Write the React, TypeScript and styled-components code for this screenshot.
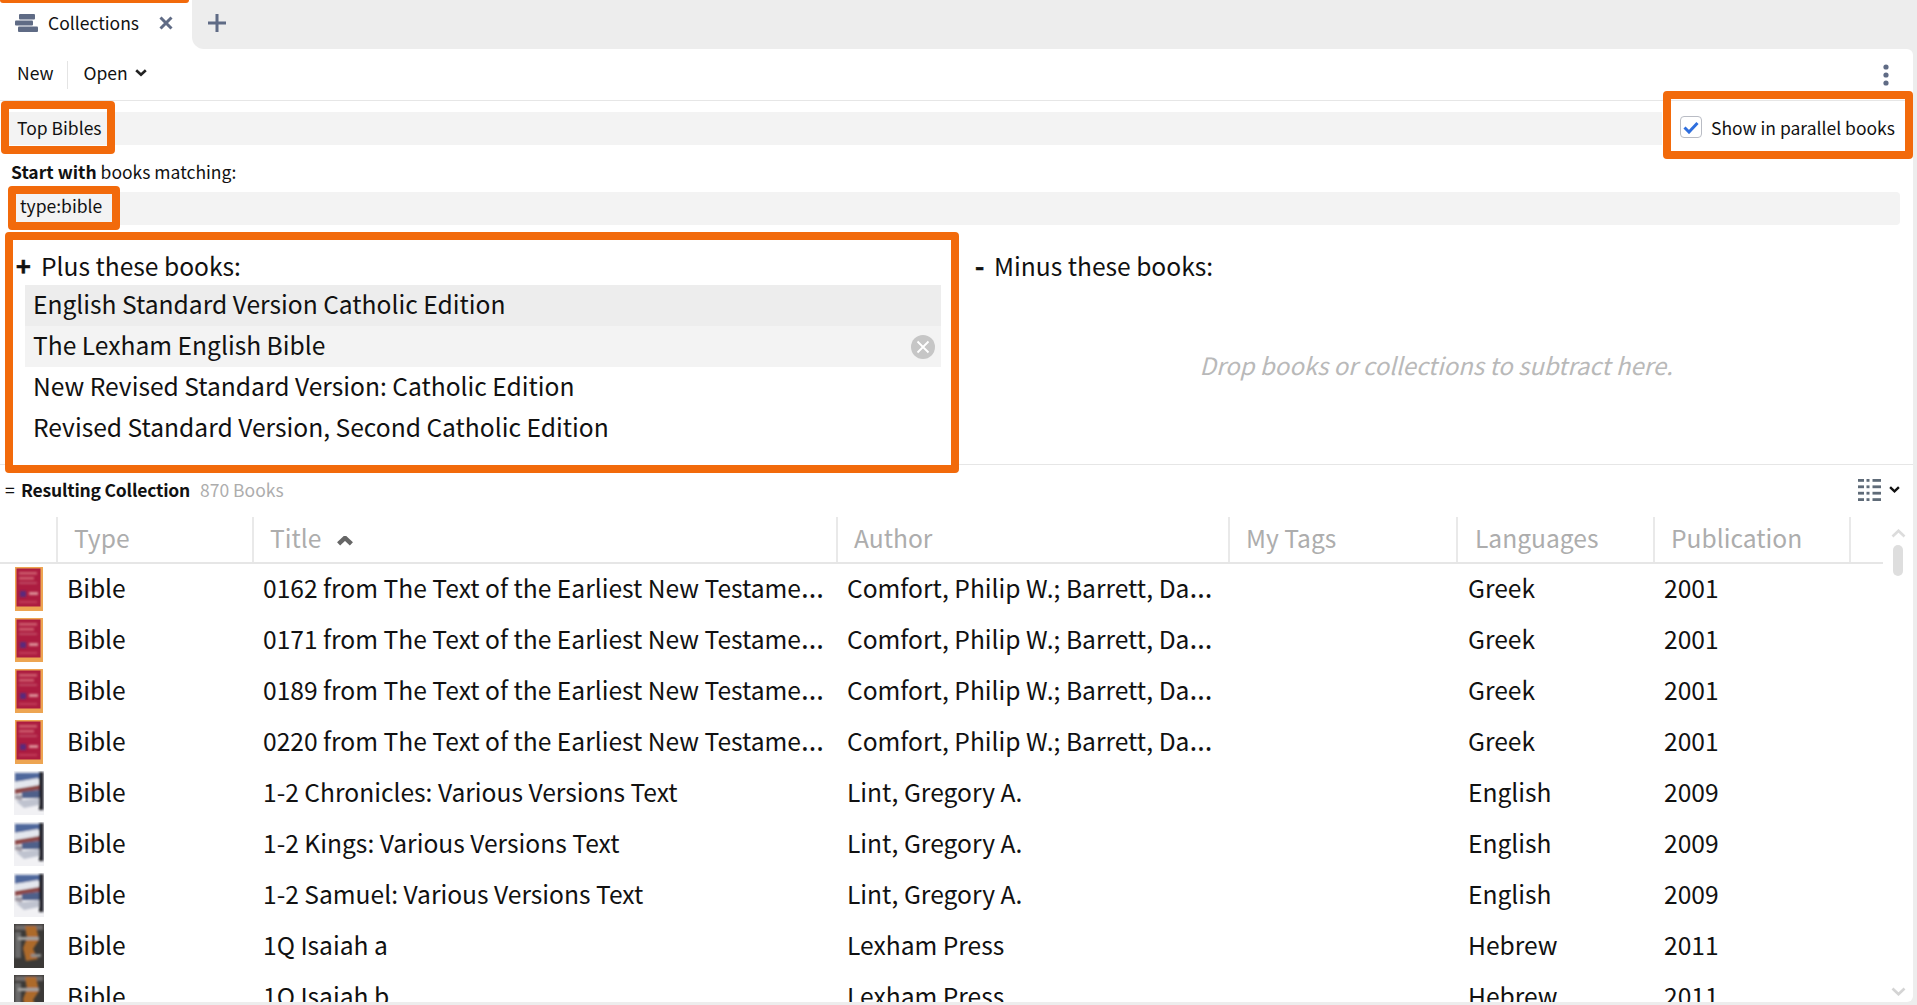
import React from "react";
import styled, { createGlobalStyle } from "styled-components";

const ORANGE = "#f26a0b";
const FONT = `"Noto Sans CJK SC", "Noto Sans", sans-serif`;

const GlobalStyle = createGlobalStyle`
  html, body {
    margin: 0;
    height: 100%;
    overflow: hidden;
    background: #ededed;
    font-family: ${FONT};
    color: #111;
  }
`;

const Page = styled.div`
  width: 1917px;
  height: 1005px;
  display: flex;
  flex-direction: column;
  overflow: hidden;
`;

const TabBar = styled.div`
  display: flex;
  height: 49px;
  flex: none;
  background: linear-gradient(to right, #fff 220px, #ededed 220px);
`;

const Tab = styled.div`
  width: 192px;
  display: flex;
  align-items: center;
  background: #fff;
  position: relative;
  padding: 0 0 3px 15px;
  box-sizing: border-box;
  font-size: 17.5px;

  &::before {
    content: "";
    position: absolute;
    left: 0;
    top: 0;
    width: 189px;
    height: 3px;
    background: ${ORANGE};
    border-radius: 0 0 3px 3px;
  }
`;

const TabLabel = styled.span`
  margin: 0 0 2px 10px;
  width: 111px;
`;

const TabRest = styled.div`
  flex: 1;
  display: flex;
  align-items: center;
  padding: 0 0 3px 16px;
  background: #ededed;
  border-bottom-left-radius: 12px;
`;

const Panel = styled.div`
  flex: 1;
  min-height: 0;
  margin: 0 4px 3px 0;
  background: #fff;
  border-radius: 0 6px 6px 0;
  display: flex;
  flex-direction: column;
  overflow: hidden;
`;

const Toolbar = styled.div`
  height: 51px;
  flex: none;
  display: flex;
  align-items: center;
  border-bottom: 1px solid #e6e6e6;
  font-size: 17.5px;
  padding-right: 24px;
`;

const ToolButton = styled.span`
  padding: 0 14px 0 17px;
  height: 28px;
  line-height: 28px;
  margin-top: -3px;
`;

const ToolDivider = styled.span`
  width: 1px;
  height: 28px;
  background: #e4e4e4;
`;

const OpenButton = styled(ToolButton)`
  display: flex;
  align-items: center;
  gap: 7px;
  flex: 1;
  padding-left: 15px;
`;

const TitleRow = styled.div`
  display: flex;
  height: 33px;
  margin: 11px 0 0 5px;
  flex: none;
`;

const Field = styled.div`
  flex: 1;
  height: 33px;
  background: #f3f3f3;
  font-size: 17.5px;
  line-height: 31px;
  display: flex;
`;

const QueryField = styled(Field)`
  flex: none;
  width: 1892px;
  margin-left: 8px;
  border-radius: 4px;
  line-height: 28px;
`;

/* the orange marks lie over the form, so they hang off their element */
const Marked = styled.span<{ $top: number; $bottom: number; $left: number; $right: number }>`
  position: relative;
  display: inline-block;
  height: 33px;

  &::after {
    content: "";
    position: absolute;
    top: ${(p) => p.$top}px;
    bottom: ${(p) => p.$bottom}px;
    left: ${(p) => p.$left}px;
    right: ${(p) => p.$right}px;
    border: 8px solid ${ORANGE};
    border-radius: 4px;
    pointer-events: none;
  }
`;

const TitleText = styled(Marked)`
  padding: 0 0 0 12px;
  width: 89px;
`;

const QueryText = styled(Marked)`
  padding-left: 12px;
  width: 92px;
`;

const ParallelOption = styled.label`
  width: 250px;
  flex: none;
  margin-left: 1px;
  position: relative;
  display: flex;
  align-items: center;
  font-size: 17.5px;
  padding: 0 0 3px 17px;
  box-sizing: border-box;
  gap: 9px;
  background: #fff;

  &::after {
    content: "";
    position: absolute;
    inset: -21px 0 -14px 0;
    border: 8px solid ${ORANGE};
    border-radius: 4px;
  }
`;

const CheckBox = styled.span`
  width: 22px;
  height: 22px;
  box-sizing: border-box;
  border: 1px solid #b9bcc4;
  border-radius: 4px;
  display: flex;
  align-items: center;
  justify-content: center;
  flex: none;
`;

const StartLabel = styled.div`
  margin: 14px 0 0 11px;
  height: 26px;
  line-height: 26px;
  font-size: 17.5px;
  flex: none;

  b {
    font-weight: 700;
  }
`;

const QueryRow = styled.div`
  margin-top: 7px;
  flex: none;
`;

const Columns = styled.div`
  display: flex;
  height: 232px;
  margin-top: 7px;
  border-bottom: 1px solid #e6e6e6;
  flex: none;
`;

const PlusPane = styled.div`
  flex: none;
  align-self: flex-start;
  width: 954px;
  height: 241px;
  margin-left: 5px;
  box-sizing: border-box;
  border: 8px solid ${ORANGE};
  border-radius: 4px;
  padding: 10px 10px 0 12px;
  position: relative;
  background: #fff;
`;

const MinusPane = styled.div`
  flex: 1;
  padding: 18px 0 0 16px;
  display: flex;
  flex-direction: column;
`;

const PaneHeading = styled.div`
  height: 35px;
  line-height: 31px;
  font-size: 24.6px;
  display: flex;
`;

const PlusHeading = styled(PaneHeading)`
  margin-left: -9px;
`;

const Sign = styled.span`
  font-weight: 700;
  font-size: 25px;
  width: 25px;
  -webkit-text-stroke: 0.6px #111;
`;

const MinusSign = styled(Sign)`
  width: 19px;
`;

const BookRow = styled.div<{ $tone?: string }>`
  height: 41px;
  box-sizing: border-box;
  padding: 0 6px 0 8px;
  font-size: 24.6px;
  line-height: 37px;
  background: ${(p) => p.$tone ?? "transparent"};
  display: flex;
  justify-content: space-between;
`;

const ClearSlot = styled.span`
  display: flex;
  align-items: center;
  height: 41px;
`;

const DropHint = styled.div`
  margin: 62px 0 0 -16px;
  text-align: center;
  font-size: 24px;
  font-style: italic;
  color: #b9b9b9;
`;

const SummaryRow = styled.div`
  height: 51px;
  flex: none;
  display: flex;
  align-items: center;
  font-size: 17.5px;
  padding: 0 13px 2px 5px;
  box-sizing: border-box;
`;

const EqualsSign = styled.span`
  width: 16px;
`;

const SummaryTitle = styled.span`
  font-weight: 700;
  letter-spacing: -0.2px;
`;

const SummaryCount = styled.span`
  color: #adadad;
  margin-left: 10px;
  flex: 1;
`;

const ViewButton = styled.span`
  display: flex;
  align-items: center;
  gap: 8px;
`;

const TableArea = styled.div`
  flex: 1;
  min-height: 0;
  display: flex;
  overflow: hidden;
`;

const Table = styled.div`
  width: 1883px;
  flex: none;
`;

const COLUMNS = "58px 196px 584px 392px 228px 197px 196px 32px";

const HeadRow = styled.div`
  display: grid;
  grid-template-columns: ${COLUMNS};
  height: 46px;
  border-bottom: 2px solid #e6e6e6;
`;

const HeadCell = styled.div<{ $inset?: number }>`
  border-right: 2px solid #e9e9e9;
  font-size: 24.6px;
  color: #adadad;
  padding: 0 0 5px ${(p) => p.$inset ?? 16}px;
  box-sizing: border-box;
  display: flex;
  align-items: center;
  gap: 16px;
  margin-top: 1px;
`;

const SortMark = styled.span`
  margin-top: 8px;
`;

const BodyRow = styled.div`
  display: grid;
  grid-template-columns: ${COLUMNS};
  height: 51px;
`;

const Cell = styled.div<{ $inset?: number }>`
  font-size: 24.6px;
  line-height: 46px;
  padding: 0 0 0 ${(p) => p.$inset ?? 9}px;
  white-space: nowrap;
  overflow: hidden;
`;

/* the CJK font centres its ellipsis, the reference sits it on the baseline */
const Dots = styled.span`
  font-family: "Noto Sans", sans-serif;
  font-size: 29px;
  line-height: 0;
`;

const CoverCell = styled.div`
  padding: 3px 0 0 14px;
`;

const ScrollColumn = styled.div`
  flex: 1;
  display: flex;
  flex-direction: column;
  align-items: center;
  padding: 13px 0 6px;
`;

const ScrollThumb = styled.div`
  width: 10px;
  height: 31px;
  margin-top: 7px;
  background: #dedede;
  border-radius: 5px;
  flex: none;
`;

const ScrollSpacer = styled.div`
  flex: 1;
`;

const IconSvg = styled.svg`
  display: block;
  flex: none;
`;

const SLATE = "#5f6b85";

const BooksIcon = () => (
  <IconSvg width="23" height="18" viewBox="0 0 23 18">
    <rect x="4" y="0" width="16" height="5.4" rx="1" fill={SLATE} />
    <rect x="0" y="6.5" width="18" height="5" rx="1" fill={SLATE} />
    <rect x="3" y="12.6" width="20" height="5.4" rx="1" fill={SLATE} />
  </IconSvg>
);

const CloseIcon = () => (
  <IconSvg width="14" height="14" viewBox="0 0 14 14">
    <path d="M1.5 1.5 12.5 12.5M12.5 1.5 1.5 12.5" stroke={SLATE} strokeWidth="3" fill="none" />
  </IconSvg>
);

const PlusIcon = () => (
  <IconSvg width="18" height="18" viewBox="0 0 18 18">
    <path d="M9 0V18M0 9H18" stroke={SLATE} strokeWidth="3" fill="none" />
  </IconSvg>
);

const Chevron = ({ up = false, color = "#222", size = 10, weight = 2 }) => (
  <IconSvg width={size} height={size * 0.6} viewBox="0 0 10 6">
    <path
      d={up ? "M1 5 5 1.2 9 5" : "M1 1 5 4.8 9 1"}
      stroke={color}
      strokeWidth={weight}
      fill="none"
    />
  </IconSvg>
);

const KebabIcon = () => (
  <IconSvg width="6" height="22" viewBox="0 0 6 22">
    <circle cx="3" cy="3" r="2.6" fill={SLATE} />
    <circle cx="3" cy="11" r="2.6" fill={SLATE} />
    <circle cx="3" cy="19" r="2.6" fill={SLATE} />
  </IconSvg>
);

const CheckIcon = () => (
  <IconSvg width="16" height="13" viewBox="0 0 16 13">
    <path d="M1.5 6.5 6 11 14.5 2" stroke="#2f6fde" strokeWidth="3" fill="none" />
  </IconSvg>
);

const ClearIcon = () => (
  <IconSvg width="24" height="24" viewBox="0 0 24 24">
    <circle cx="12" cy="12" r="12" fill="#c6c6c6" />
    <path d="M6.5 6.5 17.5 17.5M17.5 6.5 6.5 17.5" stroke="#fff" strokeWidth="1.8" />
  </IconSvg>
);

const ViewIcon = () => (
  <IconSvg width="23" height="22" viewBox="0 0 23 22" fill="#5f6b78">
    {[0, 6.4, 12.8, 19.2].map((y) => (
      <React.Fragment key={y}>
        <rect x="0" y={y} width="6" height="2.8" />
        <rect x="8.5" y={y} width="3" height="2.8" />
        <rect x="14.5" y={y} width="8.5" height="2.8" />
      </React.Fragment>
    ))}
  </IconSvg>
);

type CoverKind = "comfort" | "lint" | "lexham";

const Cover = ({ kind }: { kind: CoverKind }) => {
  const id = `blur-${kind}`;
  return (
    <IconSvg width="30" height="44" viewBox="0 0 30 44">
      <defs>
        <filter id={id} x="-10%" y="-10%" width="120%" height="120%">
          <feGaussianBlur stdDeviation="0.9" />
        </filter>
      </defs>
      {kind === "comfort" && (
        <g>
          <rect x="1" width="28" height="44" fill="#eda552" />
          <rect x="2.5" y="1.5" width="24" height="38" fill="#ac1c40" />
          <g filter={`url(#${id})`}>
            <rect x="5" y="5" width="18" height="2.5" fill="#cf6070" />
            <rect x="5" y="10" width="15" height="2.5" fill="#cf6070" />
            <rect x="5" y="15" width="18" height="2" fill="#c04a62" />
            <rect x="6" y="24" width="6" height="6" fill="#5a2a7c" />
            <rect x="15" y="25" width="9" height="3" fill="#dc8f96" />
            <rect x="5" y="34" width="18" height="2" fill="#c23c58" />
          </g>
        </g>
      )}
      {kind === "lint" && (
        <g>
          <rect x="0" width="30" height="44" fill="#f1f1f4" />
          <g filter={`url(#${id})`}>
            <path d="M1 2H25V8L1 11Z" fill="#4f689c" />
            <path d="M1 11 24 7V14L1 17Z" fill="#e4e7ee" />
            <path d="M1 18 25 14V19L1 23Z" fill="#8c4a48" />
            <path d="M8 21 25 19V27L8 27Z" fill="#4f618a" />
            <path d="M1 24 8 24V30L1 28Z" fill="#a19ca6" />
            <path d="M2 30 25 27V34L10 37Z" fill="#bfc3cf" />
            <rect x="25" y="1" width="4.5" height="38" fill="#23232a" />
          </g>
        </g>
      )}
      {kind === "lexham" && (
        <g>
          <rect width="30" height="44" fill="#3b3937" />
          <g filter={`url(#${id})`}>
            <rect x="1" y="1" width="28" height="5" fill="#6f6c6a" />
            <rect x="1" y="8" width="6" height="26" fill="#6b6a6a" />
            <path d="M11 2 22 2 25 16 19 25 24 35 12 37 9 24 13 14Z" fill="#ad6a2c" />
            <rect x="4" y="13" width="21" height="3" fill="#a3a3a1" />
            <rect x="17" y="30" width="10" height="3" fill="#8d8d8a" />
          </g>
        </g>
      )}
    </IconSvg>
  );
};

const PLUS_BOOKS = [
  "English Standard Version Catholic Edition",
  "The Lexham English Bible",
  "New Revised Standard Version: Catholic Edition",
  "Revised Standard Version, Second Catholic Edition",
];

const COMFORT = "Comfort, Philip W.; Barrett, Da";
const EARLIEST = "from The Text of the Earliest New Testame";

type Book = {
  cover: CoverKind;
  title: string;
  author: string;
  lang: string;
  year: string;
  cut?: boolean;
};

const BOOKS: Book[] = [
  { cover: "comfort", title: `0162 ${EARLIEST}`, author: COMFORT, lang: "Greek", year: "2001", cut: true },
  { cover: "comfort", title: `0171 ${EARLIEST}`, author: COMFORT, lang: "Greek", year: "2001", cut: true },
  { cover: "comfort", title: `0189 ${EARLIEST}`, author: COMFORT, lang: "Greek", year: "2001", cut: true },
  { cover: "comfort", title: `0220 ${EARLIEST}`, author: COMFORT, lang: "Greek", year: "2001", cut: true },
  { cover: "lint", title: "1-2 Chronicles: Various Versions Text", author: "Lint, Gregory A.", lang: "English", year: "2009" },
  { cover: "lint", title: "1-2 Kings: Various Versions Text", author: "Lint, Gregory A.", lang: "English", year: "2009" },
  { cover: "lint", title: "1-2 Samuel: Various Versions Text", author: "Lint, Gregory A.", lang: "English", year: "2009" },
  { cover: "lexham", title: "1Q Isaiah a", author: "Lexham Press", lang: "Hebrew", year: "2011" },
  { cover: "lexham", title: "1Q Isaiah b", author: "Lexham Press", lang: "Hebrew", year: "2011" },
];

const App = () => (
  <Page>
    <GlobalStyle />
    <TabBar>
      <Tab>
        <BooksIcon />
        <TabLabel>Collections</TabLabel>
        <CloseIcon />
      </Tab>
      <TabRest>
        <PlusIcon />
      </TabRest>
    </TabBar>
    <Panel>
      <Toolbar>
        <ToolButton>New</ToolButton>
        <ToolDivider />
        <OpenButton>
          Open <Chevron size={12} weight={2.2} />
        </OpenButton>
        <KebabIcon />
      </Toolbar>
      <TitleRow>
        <Field>
          <TitleText $top={-11} $bottom={-9} $left={-4} $right={-9}>
            Top Bibles
          </TitleText>
        </Field>
        <ParallelOption>
          <CheckBox>
            <CheckIcon />
          </CheckBox>
          Show in parallel books
        </ParallelOption>
      </TitleRow>
      <StartLabel>
        <b>Start with</b> books matching:
      </StartLabel>
      <QueryRow>
        <QueryField>
          <QueryText $top={-6} $bottom={-5} $left={0} $right={-8}>
            type:bible
          </QueryText>
        </QueryField>
      </QueryRow>
      <Columns>
        <PlusPane>
          <PlusHeading>
            <Sign>+</Sign>
            Plus these books:
          </PlusHeading>
          <BookRow $tone="#ededed">{PLUS_BOOKS[0]}</BookRow>
          <BookRow $tone="#f3f3f3">
            {PLUS_BOOKS[1]}
            <ClearSlot>
              <ClearIcon />
            </ClearSlot>
          </BookRow>
          <BookRow>{PLUS_BOOKS[2]}</BookRow>
          <BookRow>{PLUS_BOOKS[3]}</BookRow>
        </PlusPane>
        <MinusPane>
          <PaneHeading>
            <MinusSign>-</MinusSign>
            Minus these books:
          </PaneHeading>
          <DropHint>Drop books or collections to subtract here.</DropHint>
        </MinusPane>
      </Columns>
      <SummaryRow>
        <EqualsSign>=</EqualsSign>
        <SummaryTitle>Resulting Collection</SummaryTitle>
        <SummaryCount>870 Books</SummaryCount>
        <ViewButton>
          <ViewIcon />
          <Chevron color="#111" size={11} weight={2.2} />
        </ViewButton>
      </SummaryRow>
      <TableArea>
        <Table>
          <HeadRow>
            <HeadCell />
            <HeadCell>Type</HeadCell>
            <HeadCell>
              Title
              <SortMark>
                <Chevron up color="#666" size={16} weight={2.8} />
              </SortMark>
            </HeadCell>
            <HeadCell>Author</HeadCell>
            <HeadCell>My Tags</HeadCell>
            <HeadCell $inset={17}>Languages</HeadCell>
            <HeadCell>Publication</HeadCell>
          </HeadRow>
          {BOOKS.map((book) => (
            <BodyRow key={book.title}>
              <CoverCell>
                <Cover kind={book.cover} />
              </CoverCell>
              <Cell>Bible</Cell>
              <Cell>
                {book.title}
                {book.cut && <Dots>…</Dots>}
              </Cell>
              <Cell>
                {book.author}
                {book.cut && <Dots>…</Dots>}
              </Cell>
              <Cell />
              <Cell $inset={10}>{book.lang}</Cell>
              <Cell>{book.year}</Cell>
            </BodyRow>
          ))}
        </Table>
        <ScrollColumn>
          <Chevron up color="#dcdcdc" size={15} weight={1.8} />
          <ScrollThumb />
          <ScrollSpacer />
          <Chevron color="#d4d4d4" size={15} weight={1.8} />
        </ScrollColumn>
      </TableArea>
    </Panel>
  </Page>
);

export default App;
